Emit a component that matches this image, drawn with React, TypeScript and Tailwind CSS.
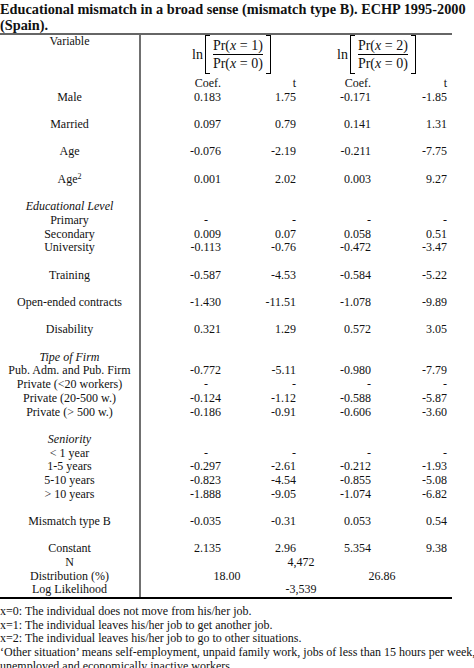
import React from "react";

type Row = {
  label?: string;
  italic?: boolean;
  sup?: string;
  vals?: string[];
  blank?: boolean;
  kind?: "span" | "dist";
};

const rows: Row[] = [
  { label: "Male", vals: ["0.183", "1.75", "-0.171", "-1.85"] },
  { blank: true },
  { label: "Married", vals: ["0.097", "0.79", "0.141", "1.31"] },
  { blank: true },
  { label: "Age", vals: ["-0.076", "-2.19", "-0.211", "-7.75"] },
  { blank: true },
  { label: "Age", sup: "2", vals: ["0.001", "2.02", "0.003", "9.27"] },
  { blank: true },
  { label: "Educational Level", italic: true },
  { label: "Primary", vals: ["-", "-", "-", "-"] },
  { label: "Secondary", vals: ["0.009", "0.07", "0.058", "0.51"] },
  { label: "University", vals: ["-0.113", "-0.76", "-0.472", "-3.47"] },
  { blank: true },
  { label: "Training", vals: ["-0.587", "-4.53", "-0.584", "-5.22"] },
  { blank: true },
  { label: "Open-ended contracts", vals: ["-1.430", "-11.51", "-1.078", "-9.89"] },
  { blank: true },
  { label: "Disability", vals: ["0.321", "1.29", "0.572", "3.05"] },
  { blank: true },
  { label: "Tipe of Firm", italic: true },
  { label: "Pub. Adm. and Pub. Firm", vals: ["-0.772", "-5.11", "-0.980", "-7.79"] },
  { label: "Private (<20 workers)", vals: ["-", "-", "-", "-"] },
  { label: "Private (20-500 w.)", vals: ["-0.124", "-1.12", "-0.588", "-5.87"] },
  { label: "Private (> 500 w.)", vals: ["-0.186", "-0.91", "-0.606", "-3.60"] },
  { blank: true },
  { label: "Seniority", italic: true },
  { label: "< 1 year", vals: ["-", "-", "-", "-"] },
  { label: "1-5 years", vals: ["-0.297", "-2.61", "-0.212", "-1.93"] },
  { label: "5-10 years", vals: ["-0.823", "-4.54", "-0.855", "-5.08"] },
  { label: "> 10 years", vals: ["-1.888", "-9.05", "-1.074", "-6.82"] },
  { blank: true },
  { label: "Mismatch type B", vals: ["-0.035", "-0.31", "0.053", "0.54"] },
  { blank: true },
  { label: "Constant", vals: ["2.135", "2.96", "5.354", "9.38"] },
  { label: "N", kind: "span", vals: ["4,472"] },
  { label: "Distribution (%)", kind: "dist", vals: ["18.00", "26.86"] },
  { label: "Log Likelihood", kind: "span", vals: ["-3,539"] },
];

const Formula = ({ n }: { n: string }) => (
  <div className="flex items-center h-[39px] text-[14px] leading-[17px]">
    <span className="mr-[2px]">ln</span>
    <div className="w-[5px] h-[39px] border-l border-t border-b border-black"></div>
    <div className="flex flex-col items-center px-[3px]">
      <span>
        Pr(<i>x</i> = {n})
      </span>
      <div className="h-px w-full bg-black"></div>
      <span>
        Pr(<i>x</i> = 0)
      </span>
    </div>
    <div className="w-[5px] h-[39px] border-r border-t border-b border-black"></div>
  </div>
);

const grid = "grid grid-cols-[141px_80px_75px_75px_76px] leading-[13.68px]";
const left = "border-r-2 border-[#707070] text-center whitespace-nowrap";

const App: React.FC = () => {
  return (
    <div className="w-[474px] h-[668px] overflow-hidden bg-white text-[#111] font-['Liberation_Serif','Times_New_Roman',serif]">
      <div className="pt-[1px] text-[14.3px] leading-[16px] font-bold whitespace-nowrap">
        Educational mismatch in a broad sense (mismatch type B). ECHP 1995-2000
        <br />
        (Spain).
      </div>

      <div className="w-[452px] h-[2px] bg-[#666]"></div>

      <div className="w-[452px] text-[12px]">
        <div className={`${grid} h-[42px]`}>
          <div className={left}>Variable</div>
          <div className="col-span-2 pl-[51px]">
            <Formula n="1" />
          </div>
          <div className="col-span-2 pl-[41px]">
            <Formula n="2" />
          </div>
        </div>

        <div className={grid}>
          <div className={left}>&nbsp;</div>
          <div className="text-right">Coef.</div>
          <div className="text-right">t</div>
          <div className="text-right">Coef.</div>
          <div className="text-right">t</div>
        </div>

        {rows.map((r, i) => (
          <div key={i} className={grid}>
            <div className={left}>
              {r.blank ? (
                "\u00a0"
              ) : r.italic ? (
                <i>{r.label}</i>
              ) : (
                <>
                  {r.label}
                  {r.sup && <sup className="text-[8px]">{r.sup}</sup>}
                </>
              )}
            </div>
            {r.kind === "span" && (
              <div className="col-span-4 text-center pl-[14px]">{r.vals![0]}</div>
            )}
            {r.kind === "dist" && (
              <>
                <div className="col-span-2 text-center pl-[17px]">{r.vals![0]}</div>
                <div className="col-span-2 text-center pl-[21px]">{r.vals![1]}</div>
              </>
            )}
            {!r.kind &&
              r.vals &&
              r.vals.map((v, j) => (
                <div
                  key={j}
                  className={`text-right ${v === "-" && j === 0 ? "pr-[13px]" : ""}`}
                >
                  {v}
                </div>
              ))}
          </div>
        ))}

        <div className="h-[2px] bg-black"></div>
      </div>

      <div className="mt-[6px] text-[12px] leading-[13.6px] whitespace-nowrap">
        <p>x=0: The individual does not move from his/her job.</p>
        <p>x=1: The individual leaves his/her job to get another job.</p>
        <p>x=2: The individual leaves his/her job to go to other situations.</p>
        <p>
          ‘Other situation’ means self-employment, unpaid family work, jobs of less than 15 hours per week,
        </p>
        <p>unemployed and economically inactive workers</p>
      </div>
    </div>
  );
};

export default App;
